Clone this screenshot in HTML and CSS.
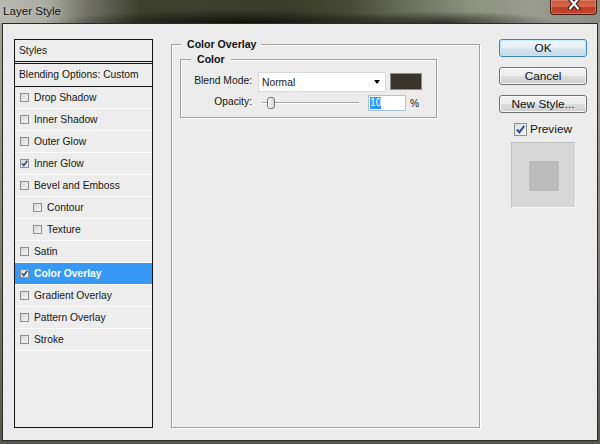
FILE: index.html
```html
<!DOCTYPE html>
<html>
<head>
<meta charset="utf-8">
<title>Layer Style</title>
<link rel="stylesheet" href="styles.css">
</head>
<body>
<div class="window">
  <div class="titlebar">
    <span class="title">Layer Style</span>
    <div class="close">
      <svg width="16" height="10" viewBox="0 0 16 10">
        <path d="M4 -1 L12 8.5 M12 -1 L4 8.5" stroke="#3b1d16" stroke-width="4.4" stroke-linecap="round" fill="none"/>
        <path d="M4 -1 L12 8.5 M12 -1 L4 8.5" stroke="#ffffff" stroke-width="2.2" stroke-linecap="round" fill="none"/>
      </svg>
    </div>
  </div>
  <div class="client">
    <div class="styles-panel">
      <div class="panel-head">Styles</div>
      <div class="panel-blend">Blending Options: Custom</div>
      <ul class="fx-list">
        <li class="fx"><span class="cb"></span>Drop Shadow</li>
        <li class="fx"><span class="cb"></span>Inner Shadow</li>
        <li class="fx"><span class="cb"></span>Outer Glow</li>
        <li class="fx"><span class="cb"><svg viewBox="0 0 7 7" width="7" height="7"><polyline points="1,3.4 2.8,5.6 6.2,0.8" fill="none" stroke="#2b3a8c" stroke-width="1.5"/></svg></span>Inner Glow</li>
        <li class="fx"><span class="cb"></span>Bevel and Emboss</li>
        <li class="fx sub"><span class="cb"></span>Contour</li>
        <li class="fx sub"><span class="cb"></span>Texture</li>
        <li class="fx"><span class="cb"></span>Satin</li>
        <li class="fx active"><span class="cb"><svg viewBox="0 0 7 7" width="7" height="7"><polyline points="1,3.4 2.8,5.6 6.2,0.8" fill="none" stroke="#2b3a8c" stroke-width="1.5"/></svg></span>Color Overlay</li>
        <li class="fx"><span class="cb"></span>Gradient Overlay</li>
        <li class="fx"><span class="cb"></span>Pattern Overlay</li>
        <li class="fx"><span class="cb"></span>Stroke</li>
      </ul>
    </div>

    <fieldset class="group outer">
      <legend>Color Overlay</legend>
      <fieldset class="group inner">
        <legend>Color</legend>
        <div class="form">
          <label class="lbl lbl-blend">Blend Mode:</label>
          <div class="blend-ctrl">
            <div class="select"><span>Normal</span><span class="arrow"></span></div>
            <div class="swatch"></div>
          </div>
          <label class="lbl">Opacity:</label>
          <div class="opacity-ctrl">
            <div class="slider"><span class="thumb"></span></div>
            <div class="num"><span class="sel">10</span></div>
            <span class="pct">%</span>
          </div>
        </div>
      </fieldset>
    </fieldset>

    <div class="actions">
      <div class="btn default">OK</div>
      <div class="btn">Cancel</div>
      <div class="btn">New Style...</div>
      <div class="preview-row">
        <span class="cb big"><svg viewBox="0 0 11 11" width="11" height="11"><polyline points="2,5.5 4.4,8.4 9.2,1.8" fill="none" stroke="#2a4aa8" stroke-width="2"/></svg></span>
        <span>Preview</span>
      </div>
      <div class="preview-box"><div class="pv-swatch"></div></div>
    </div>
  </div>
</div>
</body>
</html>
```
FILE: styles.css
```css
* { box-sizing: border-box; }
html, body { margin: 0; padding: 0; }
body {
  width: 600px;
  height: 444px;
  overflow: hidden;
  font-family: "Liberation Sans", Arial, sans-serif;
  background: #6a6a60;
}

.window {
  width: 600px;
  height: 444px;
  display: flex;
  flex-direction: column;
  background: linear-gradient(to bottom, #a6a6a0 0%, #8a8a82 45%, #55564c 100%);
}

.titlebar {
  height: 23px;
  flex: none;
  display: flex;
  justify-content: space-between;
  align-items: flex-start;
  background:
    radial-gradient(ellipse 190px 13px at 240px 23px, rgba(12,12,8,0.9), rgba(12,12,8,0)),
    radial-gradient(ellipse 120px 12px at 440px 23px, rgba(20,20,14,0.75), rgba(20,20,14,0)),
    linear-gradient(to right, #b9b9b3 0px, #abaca4 45px, #6e6f62 90px, #3d402c 140px, #393d27 290px, #474b33 350px, #727762 420px, #8c917c 470px, #9a9c8f 530px, #8c8d84 600px);
}

.title {
  margin: 4px 0 0 3px;
  font-size: 11.6px;
  line-height: 14px;
  color: #141414;
  text-shadow: 0 0 5px rgba(230,230,225,0.7);
}

.close {
  width: 47px;
  height: 15px;
  margin-right: 3px;
  border: 1px solid #4a1e14;
  border-top: none;
  border-radius: 0 0 4px 4px;
  background: linear-gradient(to bottom, #c9563d 0%, #d66a4f 45%, #bb3c22 55%, #c4482c 100%);
  box-shadow: inset 0 0 0 1px rgba(255,190,170,0.35);
  display: flex;
  justify-content: center;
  align-items: flex-start;
}
.close svg { display: block; }

.client {
  flex: 1;
  margin: 0 2px 3px 2px;
  border: 1px solid #2b2b28;
  background: #ececec;
  display: flex;
  align-items: flex-start;
  padding: 15px 0 0 11px;
}

/* left styles list */
.styles-panel {
  width: 139px;
  height: 389px;
  flex: none;
  border: 1px solid #141414;
  background: #ededed;
  font-size: 10.3px;
  color: #161616;
}
.panel-head {
  height: 22px;
  border-bottom: 1px solid #141414;
  padding-left: 4px;
  line-height: 21px;
}
.panel-blend {
  margin-top: 1px;
  height: 24px;
  border-top: 1px solid #141414;
  border-bottom: 1px solid #141414;
  padding-left: 4px;
  line-height: 22px;
}
.fx-list { list-style: none; margin: 0; padding: 0; }
.fx {
  height: 22px;
  border-bottom: 1px solid #fbfbfb;
  display: flex;
  align-items: center;
  padding-left: 5px;
  padding-bottom: 1px;
}
.fx.sub { padding-left: 18px; }
.fx.active {
  background: #3799f6;
  color: #ffffff;
  font-weight: bold;
}
.cb {
  width: 9px;
  height: 9px;
  flex: none;
  margin-right: 5px;
  border: 1px solid #8e8e8e;
  background: linear-gradient(135deg, #d6d6d6, #f6f6f6);
  display: flex;
  align-items: center;
  justify-content: center;
}
.cb svg { display: block; }

/* group boxes */
.group {
  margin: 0;
  padding: 0;
  min-width: 0;
  border: 1px solid #a2a2a2;
  box-shadow: 1px 1px 0 #ffffff, inset 1px 1px 0 #ffffff;
}
.group > legend {
  font-weight: bold;
  font-size: 10.6px;
  line-height: 13px;
  color: #121212;
  background: #ececec;
}
.outer {
  width: 309px;
  height: 390px;
  flex: none;
  margin: -1px 0 0 18px;
}
.outer > legend { margin-left: 9px; padding: 0 5px 0 6px; }
.inner {
  width: 257px;
  margin: 2px 0 0 8px;
  padding: 6px 0 6px 0;
}
.inner > legend { margin-left: 10px; padding: 0 6px; }

.form {
  display: grid;
  grid-template-columns: 71px auto;
  grid-template-rows: 20px 16px;
  column-gap: 6px;
  row-gap: 3px;
  font-size: 10.3px;
  line-height: 13px;
  color: #161616;
}
.lbl { text-align: right; }
.lbl-blend { padding-top: 2px; }

.blend-ctrl { display: flex; align-items: flex-start; }
.select {
  width: 128px;
  height: 20px;
  background: #ffffff;
  border: 1px solid #d9d9d9;
  display: flex;
  align-items: center;
  padding-left: 3px;
}
.arrow {
  margin-left: auto;
  margin-right: 5px;
  width: 0;
  height: 0;
  border-left: 3.5px solid transparent;
  border-right: 3.5px solid transparent;
  border-top: 4px solid #000000;
}
.swatch {
  width: 32px;
  height: 17px;
  margin: 1px 0 0 4px;
  background: #3a342e;
  border: 1px solid #8c8c8c;
}

.opacity-ctrl { display: flex; align-items: center; }
.slider {
  width: 97px;
  height: 12px;
  margin-left: 4px;
  display: flex;
  align-items: center;
  background: linear-gradient(to bottom, transparent 5px, #a6a6a6 5px, #a6a6a6 6px, #ffffff 6px, #ffffff 7px, transparent 7px);
}
.thumb {
  width: 8px;
  height: 12px;
  margin-left: 5px;
  border: 1px solid #767676;
  border-radius: 3px;
  background: linear-gradient(to right, #fdfdfd, #d4d4d4);
}
.num {
  width: 38px;
  height: 16px;
  margin-left: 9px;
  border: 1px solid #a9c3e2;
  background: #ffffff;
  padding-left: 1px;
  display: flex;
  align-items: center;
}
.sel { background: #3399ff; color: #ffffff; line-height: 12px; }
.pct { margin-left: 4px; }

/* right buttons */
.actions {
  width: 88px;
  flex: none;
  margin-left: 19px;
  display: flex;
  flex-direction: column;
  align-items: center;
  font-size: 11.8px;
  color: #111111;
}
.btn {
  width: 88px;
  height: 18px;
  margin-bottom: 10px;
  border: 1px solid #707070;
  border-radius: 3px;
  background: linear-gradient(to bottom, #f3f3f3 0%, #ebebeb 50%, #dddddd 51%, #cfcfcf 100%);
  box-shadow: inset 0 0 0 1px rgba(255,255,255,0.75);
  display: flex;
  align-items: center;
  justify-content: center;
  line-height: 14px;
}
.btn.default {
  border-color: #3c86bf;
  background: linear-gradient(to bottom, #f1f7fb 0%, #e6eff6 50%, #d6e5ef 51%, #c9dbe8 100%);
  box-shadow: inset 0 0 0 1px rgba(190,235,255,0.9);
}
.btn:nth-child(3) { margin-bottom: 0; }

.preview-row {
  margin-top: 9px;
  height: 14px;
  display: flex;
  align-items: center;
  line-height: 14px;
}
.cb.big {
  width: 13px;
  height: 13px;
  margin-right: 3px;
  border-color: #8e8f8f;
  background: linear-gradient(135deg, #dedede, #fafafa);
}
.preview-box {
  width: 65px;
  height: 66px;
  margin-top: 6px;
  border: 1px solid;
  border-color: #c2c2c2 #f6f6f6 #f6f6f6 #c2c2c2;
  background: #d7d7d7;
  display: flex;
  align-items: center;
  justify-content: center;
}
.pv-swatch {
  width: 30px;
  height: 30px;
  margin: 2px 0 0 1px;
  background: #bcbcbc;
}
```
